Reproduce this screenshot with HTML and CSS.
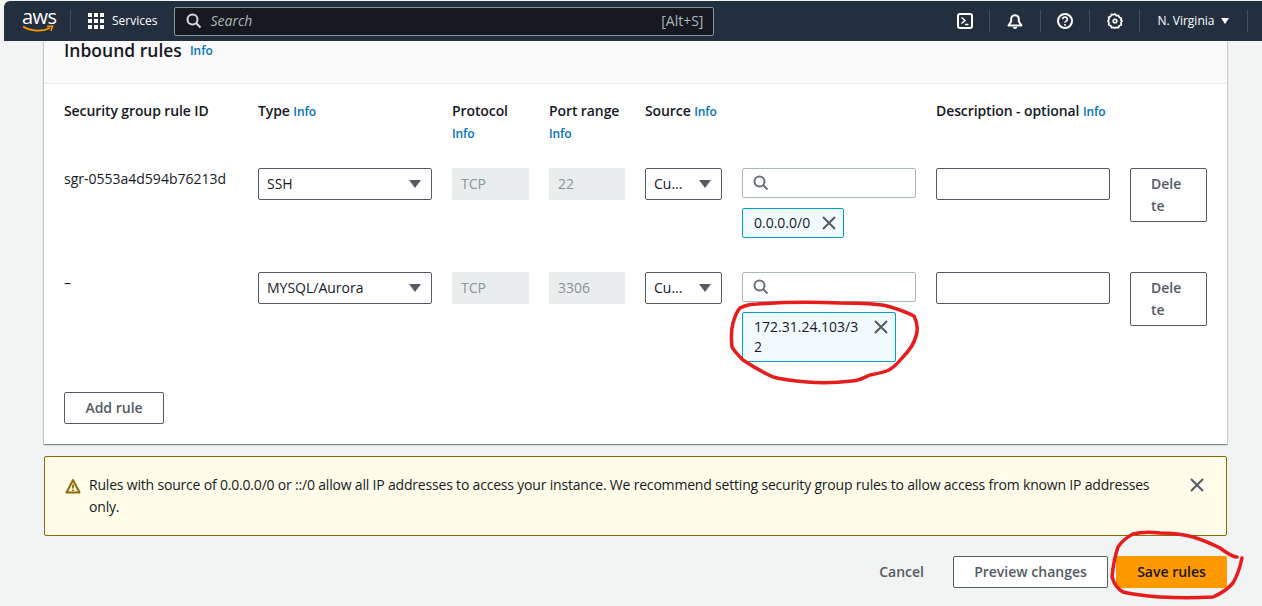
FILE: index.html

```html
<!DOCTYPE html>
<html lang="en">
<head>
  <meta charset="UTF-8" />
  <title>Edit inbound rules</title>
  <link rel="stylesheet" href="styles.css">
</head>
<body>
  <header class="topbar">
    <div class="logo">
      <span class="logo-text">aws</span>
      <svg class="logo-smile" width="32" height="8" viewBox="0 0 32 8"><path d="M1 1.5C9 6.500 20 7 28 3" fill="none" stroke="#f90" stroke-width="1.600"/><path d="M25 1.500L30.500 1L29 6" fill="none" stroke="#f90" stroke-width="1.500"/></svg>
    </div>
    <span class="sep sep-logo"></span>
    <svg class="grid-icon" width="16" height="16" viewBox="0 0 16 16" fill="#fff"><rect width="4" height="4"/><rect x="6" width="4" height="4"/><rect x="12" width="4" height="4"/><rect y="6" width="4" height="4"/><rect x="6" y="6" width="4" height="4"/><rect x="12" y="6" width="4" height="4"/><rect y="12" width="4" height="4"/><rect x="6" y="12" width="4" height="4"/><rect x="12" y="12" width="4" height="4"/></svg>
    <span class="services">Services</span>
    <div class="searchbar">
      <svg width="16" height="16" viewBox="0 0 16 16" fill="none" stroke="#d5dbdb" stroke-width="2"><circle cx="6.500" cy="6.500" r="5"/><path d="M10 10l4.500 4.500"/></svg>
      <span class="search-text">Search</span>
      <span class="search-key">[Alt+S]</span>
    </div>
    <div class="top-icons">
      <svg class="icon-shell" width="16" height="16" viewBox="0 0 16 16" fill="none" stroke="#fff" stroke-width="2"><rect x="1" y="1" width="14" height="14" rx="2"/><path d="M4.500 4.500L8 7.500L4.500 10.500" stroke-width="1.500"/><path d="M8 11.500h3.500" stroke-width="1.500"/></svg>
      <span class="sep sep-a"></span>
      <svg class="icon-bell" width="16" height="16" viewBox="0 0 16 16" fill="none" stroke="#fff" stroke-width="2"><path d="M1.500 12.500h13l-2.700-4V6a3.800 3.800 0 0 0-7.600 0v2.500z" stroke-linejoin="round"/><path d="M5.800 14a2.200 2 0 0 0 4.400 0z" fill="#fff" stroke="none"/></svg>
      <span class="sep sep-b"></span>
      <svg class="icon-help" width="16" height="16" viewBox="0 0 16 16" fill="none" stroke="#fff" stroke-width="2"><circle cx="8" cy="8" r="7"/><path d="M5.700 6.200a2.300 2.200 0 1 1 3.500 1.900c-.8.500-1.200.9-1.200 1.700" stroke-width="1.600"/><path d="M8 11v1.700" stroke-width="1.600"/></svg>
      <span class="sep sep-c"></span>
      <svg class="icon-gear" width="16" height="16" viewBox="0 0 16 16" fill="none" stroke="#fff" stroke-width="2"><path d="M8 1l1.300 1.700 2.200-.3.800 2 2 .8-.3 2.200L15 8l-1 1.600.3 2.200-2 .8-.8 2-2.200-.3L8 15l-1.300-.7-2.200.3-.8-2-2-.8.3-2.200L1 8l1-1.600-.3-2.200 2-.8.8-2 2.200.3z" stroke-width="1.700"/><circle cx="8" cy="8" r="1.800" stroke-width="1.600"/></svg>
      <span class="sep sep-d"></span>
      <span class="region">N. Virginia</span>
      <span class="region-caret"></span>
      <span class="sep sep-e"></span>
    </div>
  </header>

  <main class="page">
    <section class="card">
      <div class="card-head">
        <h2>Inbound rules</h2>
        <a class="info info-head">Info</a>
      </div>
      <div class="card-body">
        <div class="rules-grid rules-labels">
          <div class="label">Security group rule ID</div>
          <div class="label">Type <a class="info">Info</a></div>
          <div class="label">Protocol<a class="info info-block">Info</a></div>
          <div class="label">Port range<a class="info info-block">Info</a></div>
          <div class="label">Source <a class="info">Info</a></div>
          <div></div>
          <div class="label">Description - optional <a class="info">Info</a></div>
          <div></div>
        </div>

        <div class="rules-grid rule-row">
          <div class="rule-id">sgr-0553a4d594b76213d</div>
          <div class="select"><span class="select-text">SSH</span><i class="caret"></i></div>
          <div class="readonly">TCP</div>
          <div class="readonly">22</div>
          <div class="select"><span class="select-text">Cu…</span><i class="caret"></i></div>
          <div class="source">
            <div class="search-input">
              <svg width="16" height="16" viewBox="0 0 16 16" fill="none" stroke="#687078" stroke-width="2"><circle cx="6.500" cy="6.500" r="5"/><path d="M10 10l4.500 4.500"/></svg>
            </div>
            <div class="chip"><span class="chip-text">0.0.0.0/0</span><svg class="close" width="14" height="14" viewBox="0 0 14 14"><path d="M1 1l12 12M13 1L1 13"/></svg></div>
          </div>
          <input class="text-input" type="text" />
          <button class="btn delete">Delete</button>
        </div>

        <div class="rules-grid rule-row">
          <div class="rule-id">–</div>
          <div class="select"><span class="select-text">MYSQL/Aurora</span><i class="caret"></i></div>
          <div class="readonly">TCP</div>
          <div class="readonly">3306</div>
          <div class="select"><span class="select-text">Cu…</span><i class="caret"></i></div>
          <div class="source">
            <div class="search-input">
              <svg width="16" height="16" viewBox="0 0 16 16" fill="none" stroke="#687078" stroke-width="2"><circle cx="6.500" cy="6.500" r="5"/><path d="M10 10l4.500 4.500"/></svg>
            </div>
            <div class="chip"><span class="chip-text">172.31.24.103/32</span><svg class="close" width="14" height="14" viewBox="0 0 14 14"><path d="M1 1l12 12M13 1L1 13"/></svg></div>
          </div>
          <input class="text-input" type="text" />
          <button class="btn delete">Delete</button>
        </div>

        <button class="btn add-rule">Add rule</button>
      </div>
    </section>

    <div class="warning">
      <svg class="warn-icon" width="16" height="16" viewBox="0 0 16 16" fill="none" stroke="#906806" stroke-width="2"><path d="M8 2L1.500 14.500h13z" stroke-linejoin="round"/><path d="M8 6.500v4M8 11.500v1.500" stroke-width="1.800"/></svg>
      <p>Rules with source of 0.0.0.0/0 or ::/0 allow all IP addresses to access your instance. We recommend setting security group rules to allow access from known IP addresses only.</p>
      <svg class="close warn-close" width="14" height="14" viewBox="0 0 14 14"><path d="M1 1l12 12M13 1L1 13"/></svg>
    </div>

    <div class="actions">
      <button class="link-btn">Cancel</button>
      <button class="btn preview">Preview changes</button>
      <button class="save">Save rules</button>
    </div>
  </main>

  <!-- red marker scribbles drawn over the screenshot -->
  <svg class="scribbles" width="1262" height="606" viewBox="0 0 1262 606" fill="none" stroke="#e81c1c" stroke-width="3.500" stroke-linecap="round">
    <path d="M757 304C785 302 815 302 840 303C858 303 875 303 887 306C898 309 906 312 914 316C917 322 918 330 916 336C914 345 908 352 902 358C898 363 894 367 889 370C882 373 875 374 870 375C863 378 858 381 852 381C835 383 820 383 807 382C795 381 784 380 773 377C762 372 752 366 743 360C738 355 734 351 732 347C731 338 731 330 733 323C735 316 737 311 740 308C746 305 751 304 757 304Z"/>
    <path d="M1237 557C1232 557 1227 553 1220 548C1212 544 1203 540 1193 537C1182 534 1171 533 1160 533C1150 532 1141 532 1133 534C1127 537 1122 541 1118 547C1115 556 1113 566 1112 577C1114 584 1118 589 1123 592C1135 595 1147 596 1160 597C1178 598 1196 598 1213 597C1220 594 1227 590 1233 583C1237 576 1240 568 1242 558"/>
  </svg>
</body>
</html>
```

FILE: styles.css

```css
* {
  box-sizing: border-box;
}
html, body {
  height: 606px;
  overflow: hidden;
}
body {
  margin: 0;
  background-color: #f2f3f3;
  color: #16191f;
  font-family: "Open Sans", Arial, sans-serif;
  font-size: 14px;
  line-height: 22px;
  position: relative;
}

/* top nav */
.topbar {
  height: 40px;
  margin: 1px 0 0 4px;
  background-color: #232f3e;
  border-top-left-radius: 6px;
  color: #fff;
  display: flex;
  align-items: center;
  font-size: 12px;
}
.logo {
  width: 32px;
  margin-left: 18px;
  height: 26px;
  position: relative;
}
.logo-text {
  position: absolute;
  left: 0;
  top: -3px;
  font-size: 20px;
  line-height: 24px;
  letter-spacing: -0.5px;
}
.logo-smile {
  position: absolute;
  left: 0;
  top: 17px;
}
.sep {
  width: 1px;
  height: 22px;
  background-color: #414d5c;
  display: block;
}
.sep-logo {
  margin-left: 16px;
}
.grid-icon {
  margin-left: 17px;
}
.services {
  margin-left: 8px;
}
.searchbar {
  width: 540px;
  height: 29px;
  margin-left: 17px;
  background-color: #16191f;
  border: 1px solid #879596;
  border-radius: 2px;
  display: flex;
  align-items: center;
  padding: 0 10px 0 11px;
}
.search-text {
  margin-left: 8px;
  font-style: italic;
  font-size: 14px;
  color: #aab7b8;
  flex: 1;
}
.search-key {
  color: #aab7b8;
  font-size: 14px;
}
.top-icons {
  margin-left: 243px;
  display: flex;
  align-items: center;
}
.sep-a { margin: 0 17px 0 16px; }
.sep-b { margin: 0 16px 0 17px; }
.sep-c { margin: 0 17px 0 16px; }
.sep-d { margin: 0 17px 0 16px; }
.sep-e { margin-left: 18px; }
.region {
  font-size: 12px;
}
.region-caret {
  margin-left: 7px;
  border-left: 4px solid transparent;
  border-right: 4px solid transparent;
  border-top: 6px solid #fff;
}

/* page */
.page {
  padding: 0 35px 0 44px;
}
.card {
  background-color: #fff;
  box-shadow: 0 1px 1px 0 rgba(0, 28, 36, 0.3), 1px 1px 1px 0 rgba(0, 28, 36, 0.15), -1px 1px 1px 0 rgba(0, 28, 36, 0.15);
  height: 403px;
}
.card-head {
  height: 43px;
  background-color: #fafafa;
  border-bottom: 1px solid #eaeded;
  padding-left: 20px;
  display: flex;
  align-items: flex-start;
}
.card-head h2 {
  margin: -2px 0 0;
  font-size: 17.500px;
  font-weight: 600;
  line-height: 22px;
}
.info-head {
  margin: -1px 0 0 8px;
}
.info {
  color: #0073bb;
  font-size: 12px;
  font-weight: 600;
}
.info-block {
  display: block;
  margin-top: 1px;
}
.card-body {
  padding: 16px 20px 0;
}
.rules-grid {
  display: grid;
  grid-template-columns: 174px 174px 77px 76px 77px 174px 174px 77px;
  column-gap: 20px;
}
.rules-labels {
  height: 68px;
}
.label {
  font-weight: 600;
  letter-spacing: -0.1px;
}
.rule-row {
  height: 104px;
  align-items: start;
}
.select {
  height: 32px;
  border: 1px solid #545b64;
  border-radius: 2px;
  background-color: #fff;
  display: flex;
  align-items: center;
  padding: 0 16px 0 8px;
}
.select-text {
  flex: 1;
  min-width: 0;
  white-space: nowrap;
}
.caret {
  flex: none;
  margin-left: 16px;
  width: 0;
  height: 0;
  border-left: 6px solid transparent;
  border-right: 6px solid transparent;
  border-top: 8px solid #545b64;
  margin-right: -6px;
}
.readonly {
  height: 32px;
  background-color: #eaeded;
  border-radius: 2px;
  color: #879596;
  padding: 5px 9px;
}
.source {
  display: flex;
  flex-direction: column;
}
.search-input {
  height: 30px;
  border: 1px solid #aab7b8;
  border-radius: 2px;
  display: flex;
  align-items: center;
  padding-left: 10px;
}
.chip {
  margin-top: 10px;
  width: fit-content;
  max-width: 154px;
  background-color: #f1faff;
  border: 1px solid #00a1c9;
  border-radius: 2px;
  padding: 4px 7px 4px 11px;
  display: flex;
  align-items: flex-start;
  gap: 12px;
  line-height: 20px;
}
.chip-text {
  flex: 1;
  min-width: 0;
  overflow-wrap: anywhere;
}
.close {
  flex: none;
  margin-top: 3px;
  stroke: #545b64;
  stroke-width: 2;
  fill: none;
}
.text-input {
  height: 32px;
  border: 1px solid #545b64;
  border-radius: 2px;
  width: 100%;
  margin: 0;
  background-color: #fff;
}
.btn {
  font: inherit;
  font-weight: 600;
  color: #545b64;
  background-color: #fff;
  border: 1px solid #545b64;
  border-radius: 2px;
  padding: 4px 20px;
  overflow-wrap: anywhere;
}
.delete {
  text-align: left;
}
.add-rule {
  display: block;
  margin-top: 16px;
  width: 100px;
  height: 32px;
  padding: 0;
}

/* warning */
.warning {
  margin-top: 12px;
  height: 80px;
  background-color: #fffce9;
  border: 1px solid #906806;
  border-radius: 2px;
  padding: 17px 22px 0 20px;
  display: flex;
  align-items: flex-start;
}
.warn-icon {
  flex: none;
  margin-top: 4px;
}
.warning p {
  margin: 0 0 0 8px;
  flex: 1;
  letter-spacing: -0.19px;
}
.warn-close {
  margin: 4px 0 0 30px;
}

/* footer */
.actions {
  margin-top: 20px;
  display: flex;
  justify-content: flex-end;
  align-items: center;
}
.link-btn {
  font: inherit;
  font-weight: 600;
  color: #545b64;
  background: none;
  border: none;
  padding: 0;
  margin-right: 29px;
}
.preview {
  width: 155px;
  height: 32px;
  padding: 0;
}
.save {
  font: inherit;
  font-weight: 600;
  color: #16191f;
  background-color: #ff9900;
  border: none;
  border-radius: 2px;
  width: 111px;
  height: 32px;
  margin-left: 8px;
}

.scribbles {
  position: absolute;
  left: 0;
  top: 0;
  pointer-events: none;
}
```
